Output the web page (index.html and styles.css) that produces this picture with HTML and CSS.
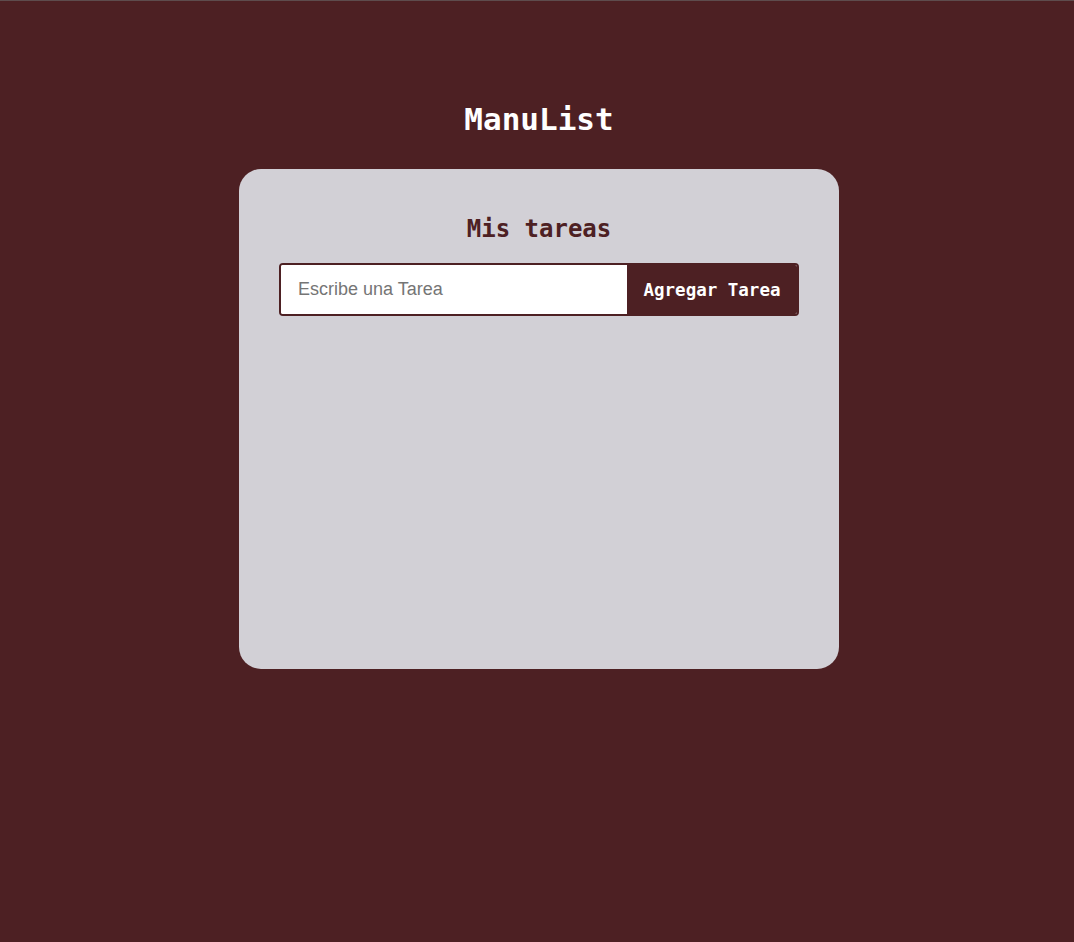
FILE: index.html
```html
<!DOCTYPE html>
<html lang="es">
<head>
<meta charset="utf-8">
<title>ManuList</title>
<link rel="stylesheet" href="styles.css">
</head>
<body>
<main class="app">
  <h1 class="brand">ManuList</h1>
  <section class="card">
    <h2 class="card-title">Mis tareas</h2>
    <form class="task-form">
      <input class="task-input" type="text" placeholder="Escribe una Tarea">
      <button class="task-btn" type="button">Agregar Tarea</button>
    </form>
    <ul class="task-list"></ul>
  </section>
</main>
</body>
</html>
```

FILE: styles.css
```css
html, body {
  margin: 0;
  padding: 0;
  height: 100%;
}
body {
  background: #4d2023;
  border-top: 1px solid #5e4c4d;
  box-sizing: border-box;
  font-family: "DejaVu Sans Mono", "Liberation Mono", monospace;
}
.app {
  display: flex;
  flex-direction: column;
  align-items: center;
  padding-top: 98px;
  padding-left: 4px;
}
.brand {
  margin: 0 0 30px;
  font-size: 31px;
  line-height: 40px;
  color: #ffffff;
  font-weight: bold;
}
.card {
  width: 600px;
  height: 500px;
  box-sizing: border-box;
  background: #d2d0d6;
  border-radius: 22px;
  padding: 45px 40px 40px;
}
.card-title {
  margin: 0 0 19px;
  text-align: center;
  font-size: 24px;
  line-height: 30px;
  color: #4d2023;
  font-weight: bold;
}
.task-form {
  display: flex;
  height: 53px;
  border: 2px solid #4d2023;
  border-radius: 4px;
  box-sizing: border-box;
  overflow: hidden;
  background: #ffffff;
}
.task-input {
  flex: 1;
  border: none;
  outline: none;
  padding: 0 17px;
  font-family: "Liberation Sans", Arial, sans-serif;
  font-size: 18px;
  color: #333;
  background: #ffffff;
  min-width: 0;
}
.task-input::placeholder {
  color: #757575;
}
.task-btn {
  width: 170px;
  border: none;
  background: #4d2023;
  color: #ffffff;
  font-family: "DejaVu Sans Mono", "Liberation Mono", monospace;
  font-weight: bold;
  font-size: 17.5px;
  padding: 0;
  cursor: pointer;
}
.task-list {
  list-style: none;
  margin: 0;
  padding: 0;
}
```
